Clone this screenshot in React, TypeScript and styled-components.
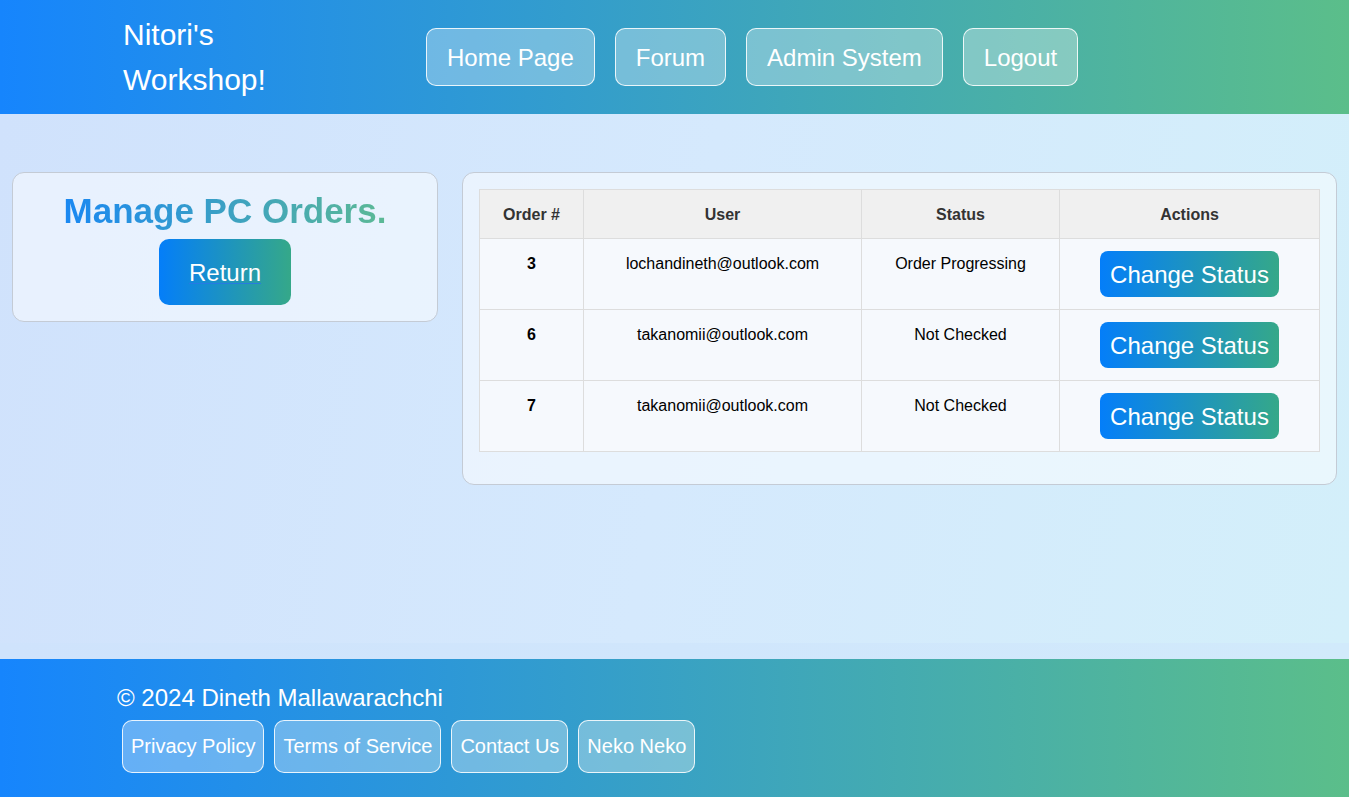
import React from "react";
import styled, { createGlobalStyle } from "styled-components";

const GlobalStyle = createGlobalStyle`
  html, body {
    margin: 0;
    padding: 0;
  }
  body {
    font-family: "Liberation Sans", Arial, sans-serif;
    background: linear-gradient(90deg, #cfe3fc 0%, #d0e6fc 50%, #d1eafb 100%);
  }
  * { box-sizing: border-box; }
`;

const Page = styled.div`
  display: flex;
  flex-direction: column;
  min-height: 100vh;
`;

const Header = styled.header`
  display: flex;
  align-items: center;
  height: 114px;
  padding-left: 123px;
  background: linear-gradient(90deg, #1685fd 0%, #5bbe8a 100%);
`;

const Brand = styled.a`
  width: 200px;
  margin-right: 103px;
  font-size: 30px;
  line-height: 45px;
  color: #ffffff;
  text-decoration: none;
`;

const Nav = styled.nav`
  display: flex;
  gap: 20px;
`;

const GlassLink = styled.a<{ $size: number; $lh: number; $pad: string }>`
  display: inline-block;
  padding: ${(p) => p.$pad};
  font-size: ${(p) => p.$size}px;
  line-height: ${(p) => p.$lh}px;
  color: #ffffff;
  text-decoration: none;
  background: rgba(255, 255, 255, 0.32);
  border: 1px solid rgba(255, 255, 255, 0.85);
  border-radius: 10px;
  white-space: nowrap;
`;

const Main = styled.main`
  flex: 1;
  display: grid;
  grid-template-columns: 426px 1fr;
  gap: 24px;
  align-items: start;
  padding: 58px 12px;
  background: linear-gradient(100deg, #d0e2fc 0%, #d5e9fd 50%, #d3effa 100%);
`;

const Card = styled.section<{ $pad: string }>`
  padding: ${(p) => p.$pad};
  background: rgba(255, 255, 255, 0.5);
  border: 1px solid #c4cbd5;
  border-radius: 12px;
`;

const SideCard = styled(Card)`
  display: flex;
  flex-direction: column;
  align-items: center;
`;

const Title = styled.h2`
  margin: 1px 0 8px;
  font-size: 35px;
  font-weight: bold;
  background: linear-gradient(90deg, #1a88f2 0%, #5cb995 100%);
  -webkit-background-clip: text;
  background-clip: text;
  color: transparent;
`;

const GradientButton = styled.a<{ $pad: string; $radius: number }>`
  display: inline-block;
  padding: ${(p) => p.$pad};
  font-size: 24px;
  line-height: 28px;
  color: #ffffff;
  background: linear-gradient(90deg, #047ef9 0%, #35a889 100%);
  border-radius: ${(p) => p.$radius}px;
  white-space: nowrap;
  cursor: pointer;
`;

const ReturnButton = styled(GradientButton)`
  text-decoration: underline;
  text-decoration-color: rgba(40, 120, 230, 0.9);
  text-decoration-thickness: 1px;
  text-underline-offset: 2px;
`;

const ActionButton = styled(GradientButton)`
  text-decoration: none;
`;

const Table = styled.table`
  width: 100%;
  border-collapse: collapse;
  margin-bottom: 16px;
  font-size: 16px;
`;

const HeadCell = styled.th<{ $w?: number }>`
  width: ${(p) => (p.$w ? `${p.$w}px` : "auto")};
  padding: 16px 15px 14px;
  background: #f0f0f0;
  color: #333333;
  font-weight: bold;
  text-align: center;
  border: 1px solid #dddddd;
`;

const Cell = styled.td<{ $bold?: boolean; $pad?: string }>`
  padding: ${(p) => p.$pad ?? "16px 15px 14px"};
  height: 71px;
  vertical-align: top;
  text-align: center;
  color: #000000;
  font-weight: ${(p) => (p.$bold ? "bold" : "normal")};
  background: #f6f9fd;
  border: 1px solid #dddddd;
`;

const Footer = styled.footer`
  margin-top: 16px;
  height: 138px;
  padding: 25px 0 0 117px;
  background: linear-gradient(90deg, #1685fd 0%, #5bbe8a 100%);
  color: #ffffff;
`;

const Copyright = styled.p`
  margin: 0 0 8px;
  font-size: 24px;
  line-height: 28px;
`;

const FooterLinks = styled.div`
  display: flex;
  gap: 10px;
  padding-left: 5px;
`;

const orders = [
  { id: 3, user: "lochandineth@outlook.com", status: "Order Progressing" },
  { id: 6, user: "takanomii@outlook.com", status: "Not Checked" },
  { id: 7, user: "takanomii@outlook.com", status: "Not Checked" },
];

export default function App() {
  return (
    <>
      <GlobalStyle />
      <Page>
        <Header>
          <Brand href="#">Nitori's Workshop!</Brand>
          <Nav>
            {["Home Page", "Forum", "Admin System", "Logout"].map((l) => (
              <GlassLink key={l} href="#" $size={24} $lh={28} $pad="15px 20px 13px">
                {l}
              </GlassLink>
            ))}
          </Nav>
        </Header>
        <Main>
          <SideCard $pad="17px 16px 16px">
            <Title>Manage PC Orders.</Title>
            <ReturnButton href="#" $pad="20px 30px 18px" $radius={10}>
              Return
            </ReturnButton>
          </SideCard>
          <Card $pad="16px">
            <Table>
              <thead>
                <tr>
                  <HeadCell $w={104}>Order #</HeadCell>
                  <HeadCell $w={278}>User</HeadCell>
                  <HeadCell $w={198}>Status</HeadCell>
                  <HeadCell>Actions</HeadCell>
                </tr>
              </thead>
              <tbody>
                {orders.map((o) => (
                  <tr key={o.id}>
                    <Cell $bold>{o.id}</Cell>
                    <Cell>{o.user}</Cell>
                    <Cell>{o.status}</Cell>
                    <Cell $pad="12px 15px">
                      <ActionButton $pad="10px 10px 8px" $radius={8}>
                        Change Status
                      </ActionButton>
                    </Cell>
                  </tr>
                ))}
              </tbody>
            </Table>
          </Card>
        </Main>
        <Footer>
          <Copyright>© 2024 Dineth Mallawarachchi</Copyright>
          <FooterLinks>
            {["Privacy Policy", "Terms of Service", "Contact Us", "Neko Neko"].map((l) => (
              <GlassLink key={l} href="#" $size={20} $lh={23} $pad="14px 8px">
                {l}
              </GlassLink>
            ))}
          </FooterLinks>
        </Footer>
      </Page>
    </>
  );
}
